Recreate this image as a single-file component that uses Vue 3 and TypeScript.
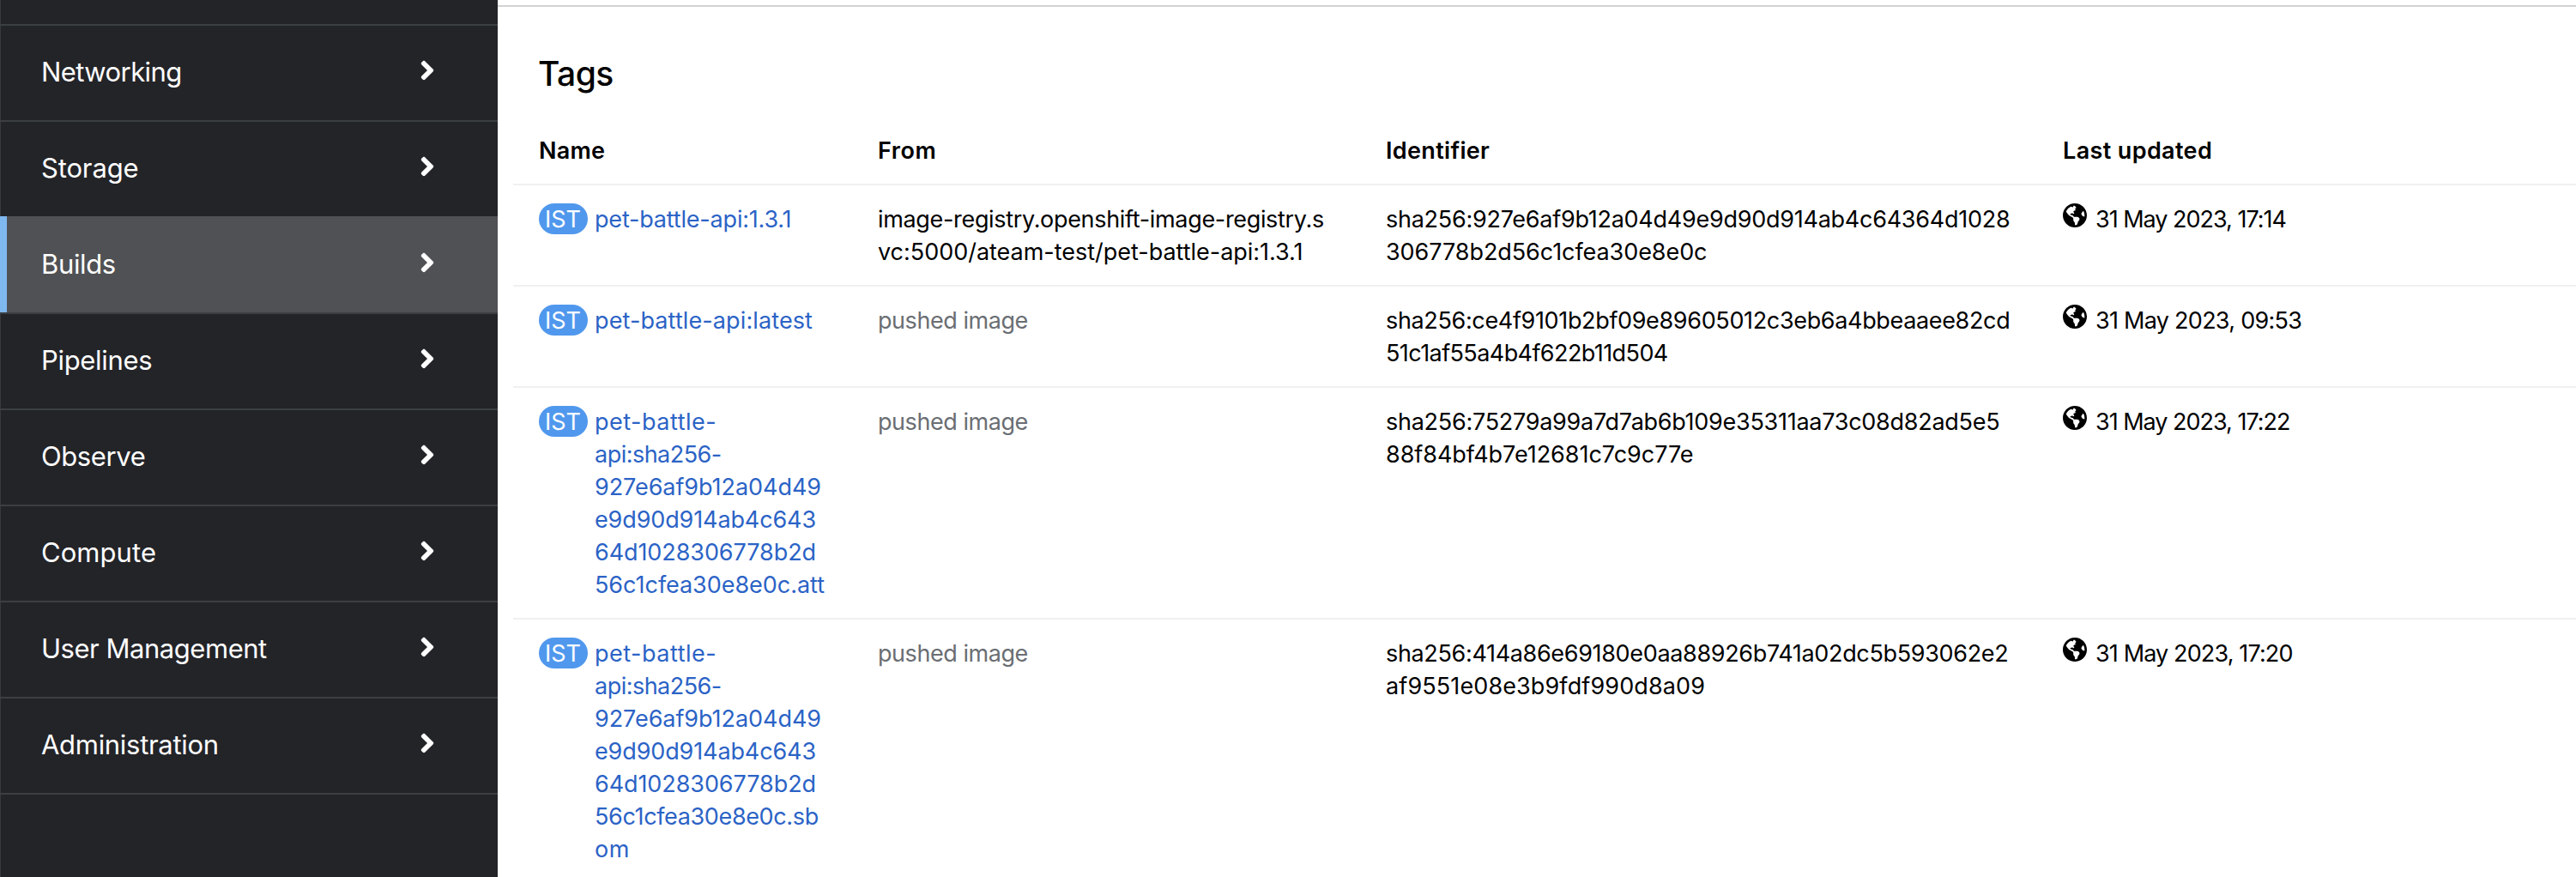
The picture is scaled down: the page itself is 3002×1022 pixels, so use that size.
<script setup lang="ts">
import type { Directive } from 'vue'

interface Line {
  text: string
  width: number
}
interface TagRow {
  name: Line[]
  from: Line[]
  pushed: boolean
  identifier: Line[]
  updated: Line
}

const line = (text: string, width: number): Line => ({ text, width })

// Tracks a label so that its advance width equals the given measure.
const vFit: Directive<HTMLElement, number> = {
  mounted(el, binding) {
    const count = (el.textContent ?? '').length
    const natural = el.getBoundingClientRect().width
    if (count > 1) el.style.letterSpacing = `${(binding.value - natural) / (count - 0.5)}px`
  },
}

const nav: (Line & { active?: boolean })[] = [
  line('Networking', 164),
  line('Storage', 113.5),
  { ...line('Builds', 87), active: true },
  line('Pipelines', 129.5),
  line('Observe', 121.5),
  line('Compute', 134),
  line('User Management', 263),
  line('Administration', 207),
]

const columns: Line[] = [
  line('Name', 77),
  line('From', 68),
  line('Identifier', 121),
  line('Last updated', 174),
]

const digestName: Line[] = [
  line('pet-battle-', 142),
  line('api:sha256-', 148),
  line('927e6af9b12a04d49', 264),
  line('e9d90d914ab4c643', 258),
  line('64d1028306778b2d', 258),
]

const rows: TagRow[] = [
  {
    name: [line('pet-battle-api:1.3.1', 229.5)],
    from: [
      line('image-registry.openshift-image-registry.s', 520),
      line('vc:5000/ateam-test/pet-battle-api:1.3.1', 495.5),
    ],
    pushed: false,
    identifier: [
      line('sha256:927e6af9b12a04d49e9d90d914ab4c64364d1028', 727.5),
      line('306778b2d56c1cfea30e8e0c', 374.5),
    ],
    updated: line('31 May 2023, 17:14', 222.5),
  },
  {
    name: [line('pet-battle-api:latest', 254)],
    from: [line('pushed image', 175)],
    pushed: true,
    identifier: [
      line('sha256:ce4f9101b2bf09e89605012c3eb6a4bbeaaee82cd', 727.5),
      line('51c1af55a4b4f622b11d504', 329),
    ],
    updated: line('31 May 2023, 09:53', 240.5),
  },
  {
    name: [...digestName, line('56c1cfea30e8e0c.att', 268)],
    from: [line('pushed image', 175)],
    pushed: true,
    identifier: [
      line('sha256:75279a99a7d7ab6b109e35311aa73c08d82ad5e5', 715.5),
      line('88f84bf4b7e12681c7c9c77e', 358.5),
    ],
    updated: line('31 May 2023, 17:22', 227),
  },
  {
    name: [...digestName, line('56c1cfea30e8e0c.sb', 261), line('om', 40.5)],
    from: [line('pushed image', 175)],
    pushed: true,
    identifier: [
      line('sha256:414a86e69180e0aa88926b741a02dc5b593062e2', 725.5),
      line('af9551e08e3b9fdf990d8a09', 372),
    ],
    updated: line('31 May 2023, 17:20', 230),
  },
]
</script>

<template>
  <div class="page">
    <nav class="sidebar">
      <div class="nav-stub"></div>
      <a v-for="item in nav" :key="item.text" class="nav-item" :class="{ active: item.active }">
        <span v-fit="item.width" class="nav-label">{{ item.text }}</span>
        <svg class="chevron" viewBox="0 0 256 512" aria-hidden="true">
          <path
            d="M224.3 273l-136 136c-9.4 9.4-24.6 9.4-33.9 0l-22.6-22.6c-9.4-9.4-9.4-24.6 0-33.9l96.4-96.4-96.4-96.4c-9.4-9.4-9.4-24.6 0-33.9L54.3 103c9.4-9.4 24.6-9.4 33.9 0l136 136c9.5 9.4 9.5 24.6.1 34z"
          />
        </svg>
      </a>
    </nav>

    <main class="content">
      <h2 class="title"><span v-fit="88">Tags</span></h2>
      <div class="table">
        <div class="row head">
          <div v-for="col in columns" :key="col.text">
            <span v-fit="col.width">{{ col.text }}</span>
          </div>
        </div>
        <div v-for="(row, i) in rows" :key="i" class="row">
          <div class="name">
            <span class="badge"><span v-fit="42">IST</span></span>
            <a class="link">
              <span v-for="l in row.name" :key="l.text" class="line">
                <span v-fit="l.width">{{ l.text }}</span>
              </span>
            </a>
          </div>
          <div :class="{ muted: row.pushed }">
            <span v-for="l in row.from" :key="l.text" class="line">
              <span v-fit="l.width">{{ l.text }}</span>
            </span>
          </div>
          <div>
            <span v-for="l in row.identifier" :key="l.text" class="line">
              <span v-fit="l.width">{{ l.text }}</span>
            </span>
          </div>
          <div class="updated">
            <svg class="globe" viewBox="0 8 496 496" aria-hidden="true">
              <path
                d="M248 8C111.03 8 0 119.03 0 256s111.03 248 248 248 248-111.03 248-248S384.97 8 248 8zm82.29 357.6c-3.9 3.88-7.99 7.95-11.31 11.28-2.99 3-5.1 6.7-6.17 10.71-1.51 5.66-2.73 11.38-4.77 16.87l-17.39 46.85c-13.76 3-28 4.69-42.65 4.69v-27.38c1.69-12.62-7.64-36.26-22.63-51.25-6-6-9.37-14.14-9.37-22.63v-32.01c0-11.64-6.27-22.34-16.46-27.97-14.37-7.95-34.81-19.06-48.81-26.11-11.48-5.78-22.1-13.14-31.65-21.75l-.8-.72a114.792 114.792 0 0 1-18.06-20.74c-9.38-13.77-24.66-36.42-34.59-51.14 20.47-45.5 57.36-82.04 103.2-101.89l24.01 12.01C203.48 89.74 216 82.01 216 70.11v-11.3c7.99-1.29 16.12-2.11 24.39-2.42l28.3 28.3c6.25 6.25 6.25 16.38 0 22.63L264 112l-10.34 10.34c-3.12 3.12-3.12 8.19 0 11.31l4.69 4.69c3.12 3.12 3.12 8.19 0 11.31l-8 8a8.008 8.008 0 0 1-5.66 2.34h-8.99c-2.08 0-4.08.81-5.58 2.27l-9.92 9.65a8.008 8.008 0 0 0-1.58 9.31l15.59 31.19c2.66 5.32-1.21 11.58-7.15 11.58h-5.64c-1.93 0-3.79-.7-5.24-1.96l-9.28-8.06a16.017 16.017 0 0 0-15.55-3.1l-31.17 10.39a11.95 11.95 0 0 0-8.17 11.34c0 4.53 2.56 8.66 6.61 10.69l11.08 5.54c9.41 4.71 19.79 7.16 30.31 7.16s22.59 27.29 32 32h66.75c8.49 0 16.62 3.37 22.63 9.37l13.69 13.69a30.503 30.503 0 0 1 8.93 21.57 46.536 46.536 0 0 1-13.72 32.98zM417 274.25c-5.79-1.45-10.84-5-14.15-9.97l-17.98-26.97a23.97 23.97 0 0 1 0-26.62l19.59-29.38c2.32-3.47 5.5-6.29 9.24-8.15l12.98-6.49C440.2 193.59 448 223.87 448 256c0 8.67-.74 17.16-1.82 25.54L417 274.25z"
              />
            </svg>
            <span v-fit="row.updated.width">{{ row.updated.text }}</span>
          </div>
        </div>
      </div>
    </main>
  </div>
</template>

<style>
body {
  margin: 0;
  overflow: hidden;
}
</style>

<style scoped>
.page {
  display: flex;
  width: 100vw;
  height: 100vh;
  overflow: hidden;
  background: #fff;
  color: #000;
  font-family: Inter, 'Open Sans', sans-serif;
  font-size: 27px;
  line-height: 38px;
  white-space: nowrap;
  font-variant-ligatures: none;
}
.sidebar {
  box-sizing: border-box;
  flex: 0 0 580px;
  background: #232428;
  box-shadow: inset 1px 0 #393a3e;
  color: #fff;
  font-size: 31px;
}
.nav-stub {
  height: 28px;
  border-bottom: 2px solid #3c3f42;
}
.nav-item {
  box-sizing: border-box;
  display: flex;
  align-items: center;
  justify-content: space-between;
  height: 112px;
  padding: 0 73px 6px 48px;
  border-bottom: 2px solid #3c3f42;
}
.nav-item.active {
  height: 114px;
  margin-top: -2px;
  padding-top: 2px;
  background: #505154;
  box-shadow: inset 8px 0 #7fb8f1;
}
.nav-label {
  margin-top: 4px;
}
.chevron {
  width: 18px;
  height: 36px;
  fill: #fff;
}
.content {
  flex: 1;
  min-width: 0;
  margin-top: 6px;
  border-top: 2px solid #d2d2d2;
}
.title {
  margin: 54px 0 0 47px;
  font-size: 39px;
  font-weight: 500;
  line-height: 48px;
}
.table {
  margin: 26px 0 0 18px;
}
.row {
  display: grid;
  grid-template-columns: 395px 592px 789px 1fr;
  padding: 21px 0 19px 30px;
  border-bottom: 2px solid #f0f0f0;
}
.head {
  height: 38px;
  font-weight: 600;
}
.line {
  display: block;
}
.name {
  display: flex;
  align-items: flex-start;
  gap: 8px;
}
.badge {
  box-sizing: border-box;
  width: 57px;
  height: 36px;
  padding-left: 7px;
  border-radius: 18px;
  background: #5098ed;
  color: #fff;
  line-height: 37px;
}
.link {
  color: #2b63c6;
}
.muted {
  color: #6a6e73;
}
.updated {
  display: flex;
  align-items: flex-start;
}
.globe {
  width: 28px;
  height: 28px;
  margin: 0 10px 0 0;
}
</style>
